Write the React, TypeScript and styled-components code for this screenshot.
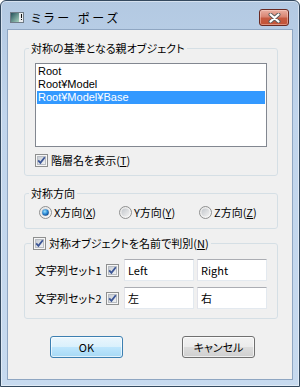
import styled, { createGlobalStyle } from 'styled-components';

const GlobalStyle = createGlobalStyle`
  html, body {
    margin: 0;
    background: #fff;
  }
  body {
    font-family: "Noto Sans CJK JP", "Liberation Sans", sans-serif;
    font-size: 11px;
    font-feature-settings: "palt";
    color: #000;
  }
`;

const Window = styled.div`
  width: 300px;
  height: 387px;
  box-sizing: border-box;
  border: 1px solid #34495f;
  border-radius: 6px 6px 0 0;
  background: linear-gradient(180deg, #b3c9e2 0%, #c1d5ec 30%, #c7daef 100%);
  box-shadow: inset 0 0 0 1px rgba(255, 255, 255, 0.45);
  display: flex;
  flex-direction: column;
  overflow: hidden;
`;

const TitleBar = styled.div`
  height: 28px;
  display: flex;
  align-items: center;
  padding: 5px 10px 0 9px;
  box-sizing: border-box;
`;

const Title = styled.span`
  margin-left: 7px;
  font-size: 12px;
  letter-spacing: 3px;
  line-height: 14px;
`;

const CloseButton = styled.div`
  margin-left: auto;
  width: 30px;
  height: 17px;
  box-sizing: border-box;
  border: 1px solid #6a2a22;
  border-radius: 3px;
  background: linear-gradient(180deg, #eab0a3 0%, #d98573 45%, #c65a41 55%, #c25336 100%);
  box-shadow: inset 0 0 0 1px rgba(255, 220, 210, 0.45);
  display: flex;
  align-items: center;
  justify-content: center;
`;

const Client = styled.div`
  flex: 1;
  margin: 0 6px 6px;
  border: 1px solid #8fa6c2;
  background: #f0f0f0;
  padding: 11px 14px 0 16px;
  display: flex;
  flex-direction: column;
`;

const Group = styled.fieldset<{ $top?: number }>`
  margin: ${({ $top }) => $top ?? 0}px 0 0;
  padding: 0 10px ${({ $top }) => ($top ? 9 : 8)}px;
  border: 1px solid #d5dfe5;
  border-radius: 3px;
  min-width: 0;
`;

const Legend = styled.legend<{ $shift: number }>`
  padding: 0 2px;
  margin-left: ${({ $shift }) => $shift}px;
  line-height: 14px;
  display: flex;
  align-items: center;
  white-space: nowrap;
`;

const ListBox = styled.div`
  margin-top: 8px;
  height: 84px;
  box-sizing: border-box;
  border: 1px solid #828790;
  background: #fff;
  padding: 1px;
`;

const ListItem = styled.div<{ $selected?: boolean }>`
  height: 13px;
  line-height: 13px;
  padding-left: 1px;
  font-family: "Liberation Sans", sans-serif;
  background: ${({ $selected }) => ($selected ? '#3399ff' : 'transparent')};
  color: ${({ $selected }) => ($selected ? '#fff' : '#000')};
  white-space: nowrap;
`;

const CheckRow = styled.label<{ $top?: number }>`
  margin-top: ${({ $top }) => $top ?? 0}px;
  display: flex;
  align-items: center;
  gap: 3px;
  line-height: 13px;
  white-space: nowrap;
`;

const RadioRow = styled.div`
  margin-top: 6px;
  padding-left: 4px;
  display: flex;
`;

const RadioOption = styled.label`
  width: 80px;
  flex: none;
  display: flex;
  align-items: center;
  gap: 2px;
  line-height: 13px;
  white-space: nowrap;
`;

const SetRow = styled.div<{ $top: number }>`
  margin-top: ${({ $top }) => $top}px;
  display: flex;
  align-items: center;
`;

const SetLabel = styled.span`
  width: 71px;
  flex: none;
  line-height: 14px;
  white-space: nowrap;
`;

const TextBox = styled.div`
  width: 70px;
  height: 22px;
  flex: none;
  box-sizing: border-box;
  margin-left: 3px;
  border: 1px solid #e3e9ef;
  border-top-color: #abadb3;
  border-left-color: #e2e3ea;
  background: #fff;
  padding: 0 0 0 3px;
  line-height: 20px;
  &:first-of-type {
    margin-left: 5px;
  }
`;

const ButtonRow = styled.div`
  margin-top: 17px;
  padding-left: 26px;
  display: flex;
  gap: 59px;
`;

const Button = styled.div<{ $default?: boolean }>`
  width: 73px;
  height: 22px;
  box-sizing: border-box;
  border: 1px solid ${({ $default }) => ($default ? '#3c7fb1' : '#707070')};
  border-radius: 3px;
  background: ${({ $default }) =>
    $default
      ? 'linear-gradient(180deg, #eaf6fd 0%, #d9f0fc 50%, #bee6fd 50%, #a7d9f5 100%)'
      : 'linear-gradient(180deg, #f2f2f2 0%, #ebebeb 50%, #dddddd 50%, #cfcfcf 100%)'};
  box-shadow: inset 0 0 0 1px rgba(255, 255, 255, 0.65);
  display: flex;
  align-items: center;
  justify-content: center;
  line-height: 14px;
`;

function WindowIcon() {
  return (
    <svg width="14" height="11" viewBox="0 0 14 11">
      <defs>
        <linearGradient id="wi" x1="0" y1="0" x2="1" y2="1">
          <stop offset="0" stopColor="#24505a" />
          <stop offset="1" stopColor="#a8d4c0" />
        </linearGradient>
      </defs>
      <rect x="0.5" y="0.5" width="13" height="10" fill="#e9ecef" stroke="#6f7b86" />
      <rect x="1" y="1" width="8" height="9" fill="url(#wi)" />
      <rect x="11" y="2" width="1" height="4" fill="#111" />
      <rect x="11" y="7" width="1" height="1" fill="#111" />
    </svg>
  );
}

function CloseGlyph() {
  return (
    <svg width="13" height="10" viewBox="0 0 13 10">
      <path d="M2.5 1.5 L10.5 8.5 M10.5 1.5 L2.5 8.5" stroke="#5b5b5b" strokeWidth="4" strokeLinecap="round" />
      <path d="M2.5 1.5 L10.5 8.5 M10.5 1.5 L2.5 8.5" stroke="#fff" strokeWidth="2.2" strokeLinecap="round" />
    </svg>
  );
}

function CheckBox() {
  return (
    <svg width="13" height="13" viewBox="0 0 13 13" style={{ flex: 'none' }}>
      <defs>
        <linearGradient id="cb" x1="0" y1="0" x2="1" y2="1">
          <stop offset="0" stopColor="#c5cad1" />
          <stop offset="1" stopColor="#f4f5f6" />
        </linearGradient>
      </defs>
      <rect x="0.5" y="0.5" width="12" height="12" fill="#f6f6f6" stroke="#8e8f8f" />
      <rect x="2.5" y="2.5" width="8" height="8" fill="url(#cb)" stroke="#b9bdc3" />
      <path d="M3.2 6.4 L5.4 8.8 L9.8 3.2" fill="none" stroke="#3b5596" strokeWidth="1.8" />
    </svg>
  );
}

function Radio({ checked }: { checked?: boolean }) {
  return (
    <svg width="13" height="13" viewBox="0 0 13 13" style={{ flex: 'none' }}>
      <defs>
        <linearGradient id="rbo" x1="0" y1="0" x2="1" y2="1">
          <stop offset="0" stopColor="#e6e6e6" />
          <stop offset="1" stopColor="#fafafa" />
        </linearGradient>
        <linearGradient id="rbi" x1="0" y1="0" x2="1" y2="1">
          <stop offset="0" stopColor="#c3c7cc" />
          <stop offset="1" stopColor="#f2f2f2" />
        </linearGradient>
        <radialGradient id="rbd" cx="0.4" cy="0.35" r="0.7">
          <stop offset="0" stopColor="#9fe1fb" />
          <stop offset="0.55" stopColor="#2b8ad6" />
          <stop offset="1" stopColor="#10407f" />
        </radialGradient>
      </defs>
      <circle cx="6.5" cy="6.5" r="6" fill="url(#rbo)" stroke="#8e8f8f" />
      <circle cx="6.5" cy="6.5" r="4" fill="url(#rbi)" />
      {checked && <circle cx="6.5" cy="6.5" r="3.3" fill="url(#rbd)" />}
    </svg>
  );
}

export default function App() {
  return (
    <>
      <GlobalStyle />
      <Window>
        <TitleBar>
          <WindowIcon />
          <Title>ミラー ポーズ</Title>
          <CloseButton>
            <CloseGlyph />
          </CloseButton>
        </TitleBar>
        <Client>
          <Group>
            <Legend $shift={-6}>対称の基準となる親オブジェクト</Legend>
            <ListBox>
              <ListItem>Root</ListItem>
              <ListItem>Root¥Model</ListItem>
              <ListItem $selected>Root¥Model¥Base</ListItem>
            </ListBox>
            <CheckRow $top={7}>
              <CheckBox />
              <span>
                階層名を表示(<u>T</u>)
              </span>
            </CheckRow>
          </Group>

          <Group $top={10}>
            <Legend $shift={-6}>対称方向</Legend>
            <RadioRow>
              <RadioOption>
                <Radio checked />
                <span>
                  X方向(<u>X</u>)
                </span>
              </RadioOption>
              <RadioOption>
                <Radio />
                <span>
                  Y方向(<u>Y</u>)
                </span>
              </RadioOption>
              <RadioOption>
                <Radio />
                <span>
                  Z方向(<u>Z</u>)
                </span>
              </RadioOption>
            </RadioRow>
          </Group>

          <Group $top={8}>
            <Legend $shift={-4}>
              <CheckRow>
                <CheckBox />
                <span>
                  対称オブジェクトを名前で判別(<u>N</u>)
                </span>
              </CheckRow>
            </Legend>
            <SetRow $top={9}>
              <SetLabel>文字列セット1</SetLabel>
              <CheckBox />
              <TextBox>Left</TextBox>
              <TextBox>Right</TextBox>
            </SetRow>
            <SetRow $top={6}>
              <SetLabel>文字列セット2</SetLabel>
              <CheckBox />
              <TextBox>左</TextBox>
              <TextBox>右</TextBox>
            </SetRow>
          </Group>

          <ButtonRow>
            <Button $default>OK</Button>
            <Button>キャンセル</Button>
          </ButtonRow>
        </Client>
      </Window>
    </>
  );
}
